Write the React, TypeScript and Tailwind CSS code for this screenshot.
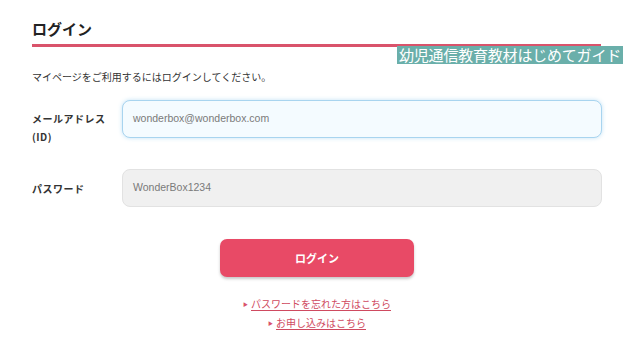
export default function App() {
  return (
    <div className="relative w-[640px] h-[348px] bg-white overflow-hidden" style={{ fontFamily: '"Noto Sans CJK JP", "Noto Sans", sans-serif' }}>
      <div className="pl-[32px] pt-[18px] w-[602px]">
        {/* heading */}
        <h1 className="text-[15px] leading-[22px] font-bold text-[#222]">ログイン</h1>
        <div className="mt-[4px] h-[3px] w-[569px] bg-[#d9536b]" />

        <p className="mt-[23px] text-[10px] leading-[14px] text-[#333]">マイページをご利用するにはログインしてください。</p>

        {/* email */}
        <div className="mt-[16px] flex">
          <div className="w-[90px] pt-[10px] text-[10px] leading-[18px] font-bold text-[#333] tracking-[0.5px]">
            メールアドレス
            <br />
            (ID)
          </div>
          <div className="flex-1 h-[38px] rounded-[8px] border border-[#a8d4ef] bg-[#f4fbff] shadow-[0_0_4px_rgba(120,190,235,0.45)] flex items-center pl-[10px] text-[10.5px] text-[#7a7a7a]" style={{ fontFamily: '"Liberation Sans", Arial, sans-serif' }}>
            wonderbox@wonderbox.com
          </div>
        </div>

        {/* password */}
        <div className="mt-[23px] flex items-center">
          <div className="w-[90px] text-[10px] font-bold text-[#333] tracking-[0.5px]">パスワード</div>
          <div className="flex-1 h-[38px] rounded-[8px] border border-[#e2e2e2] bg-[#f0f0f0] flex items-center pl-[10px] text-[10.5px] text-[#7a7a7a]" style={{ fontFamily: '"Liberation Sans", Arial, sans-serif' }}>
            WonderBox1234
          </div>
        </div>

        {/* button */}
        <div className="mt-[32px] flex justify-center">
          <button className="w-[194px] h-[38px] rounded-[7px] bg-[#e84a66] text-white text-[11px] font-bold shadow-[0_2px_3px_rgba(0,0,0,0.22)]">ログイン</button>
        </div>

        {/* links */}
        <div className="mt-[17px] flex flex-col items-center text-[10px] leading-[19px] text-[#cf4a60]">
          <a className="flex items-center gap-[3px]">
            <span className="text-[5px] text-[#d9536b]">▶</span>
            <span className="underline underline-offset-2">パスワードを忘れた方はこちら</span>
          </a>
          <a className="flex items-center gap-[3px]">
            <span className="text-[5px] text-[#d9536b]">▶</span>
            <span className="underline underline-offset-2">お申し込みはこちら</span>
          </a>
        </div>
      </div>

      {/* watermark overlay */}
      <div className="absolute left-[397px] top-[46px] h-[18px] px-[2px] bg-[#6aafaa] text-white text-[15px] leading-[18px] tracking-[-0.2px] whitespace-nowrap">
        幼児通信教育教材はじめてガイド
      </div>
    </div>
  );
}
